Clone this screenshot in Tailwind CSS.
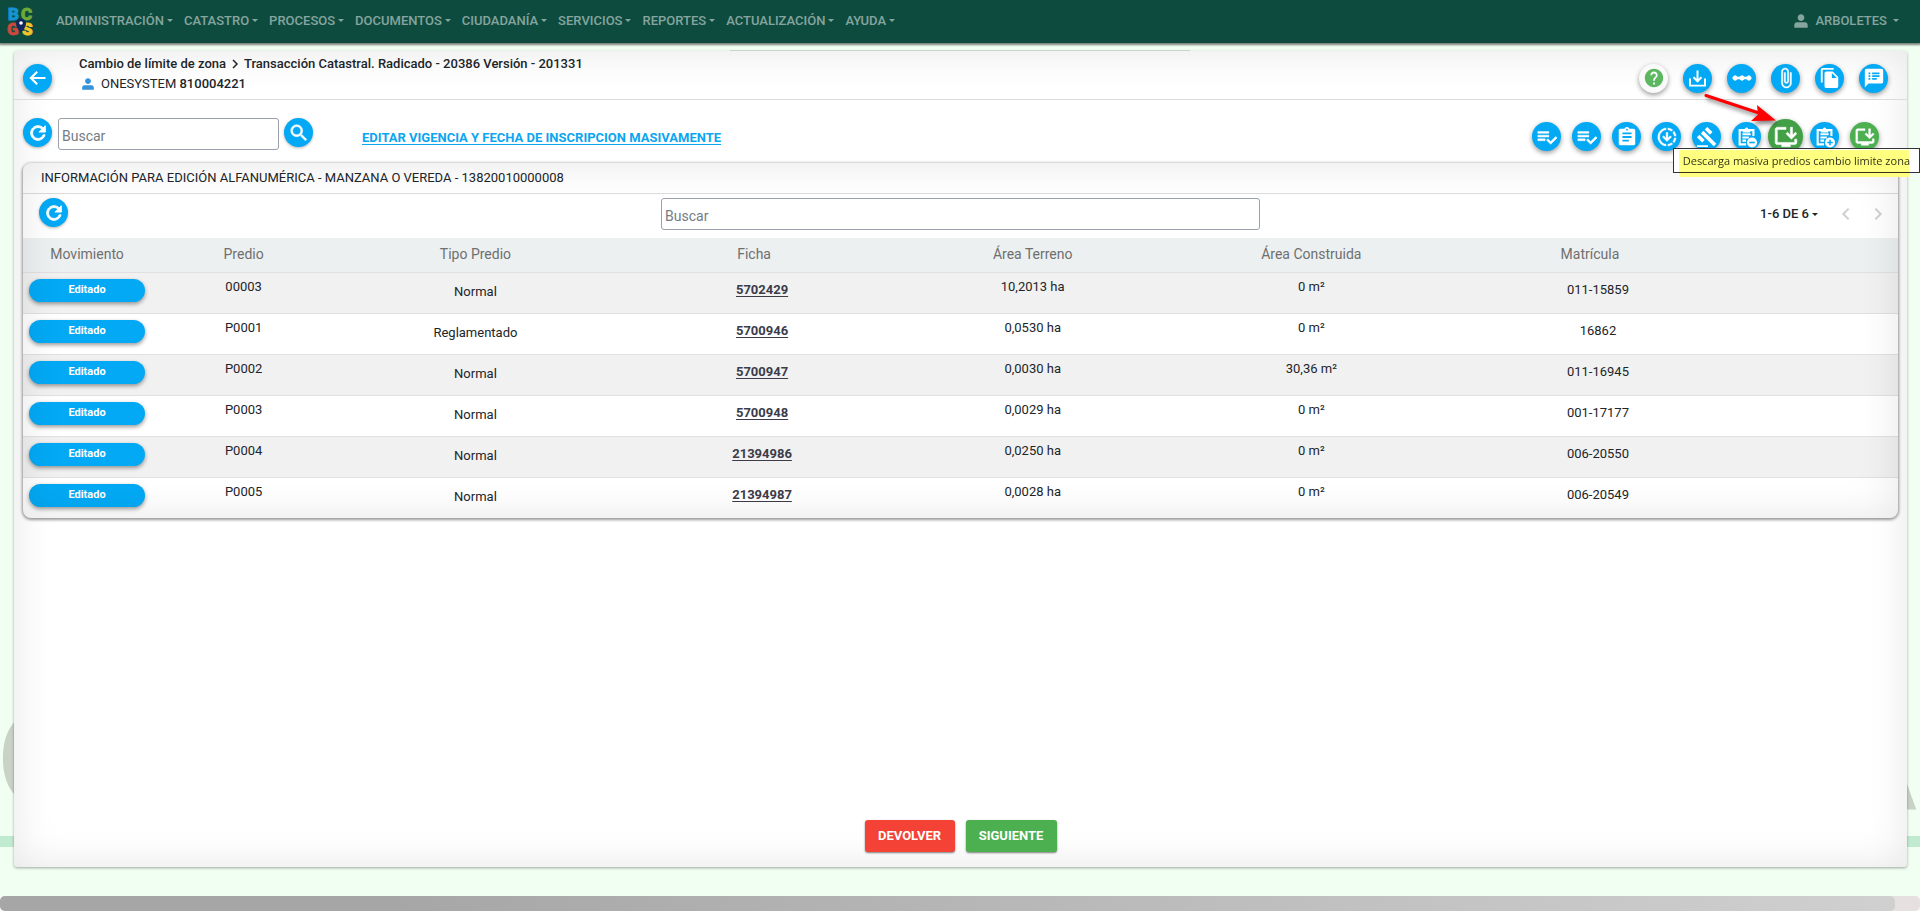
<!DOCTYPE html>
<html lang="es">
<head>
  <meta charset="UTF-8" />
  <meta name="viewport" content="width=device-width, initial-scale=1" />
  <title>Cambio de límite de zona</title>
  <script src="https://cdn.jsdelivr.net/npm/@tailwindcss/browser@4"></script>
</head>
<body class="relative flex h-screen flex-col overflow-hidden bg-[#f0fff2] font-[Roboto,sans-serif] text-[13px] leading-5 text-[#212529]">

  <!-- Icon sprite -->
  <svg class="hidden" aria-hidden="true">
    <symbol id="i-back" viewBox="0 0 24 24"><path d="M21 12H4M11 4.500l-7.500 7.500 7.500 7.500" fill="none" stroke="currentColor" stroke-width="2.600" /></symbol>
    <symbol id="i-user" viewBox="0 0 24 24"><path d="M12 12c2.760 0 5-2.240 5-5s-2.240-5-5-5-5 2.240-5 5 2.240 5 5 5zM6 14c-2.200 0-4 1.800-4 4v4h20v-4c0-2.200-1.800-4-4-4z" /></symbol>
    <symbol id="i-refresh" viewBox="0 0 24 24"><path stroke="currentColor" d="M17.650 6.350C16.200 4.900 14.210 4 12 4c-4.420 0-7.990 3.580-7.990 8s3.570 8 7.990 8c3.730 0 6.840-2.550 7.730-6h-2.080c-.82 2.330-3.040 4-5.650 4-3.310 0-6-2.690-6-6s2.690-6 6-6c1.660 0 3.140.69 4.220 1.780L13 11h7V4l-2.350 2.350z" /></symbol>
    <symbol id="i-search" viewBox="0 0 24 24"><path stroke="currentColor" stroke-width=".6" d="M15.500 14h-.79l-.28-.27A6.470 6.470 0 0 0 16 9.500 6.500 6.500 0 1 0 9.500 16c1.610 0 3.090-.59 4.230-1.570l.27.28v.79l5 4.990L20.490 19l-4.990-5zm-6 0C7.010 14 5 11.990 5 9.500S7.010 5 9.500 5 14 7.010 14 9.500 11.990 14 9.500 14z" /></symbol>
    <symbol id="i-help" viewBox="0 0 24 24"><path d="M12 2C6.480 2 2 6.480 2 12s4.480 10 10 10 10-4.480 10-10S17.520 2 12 2zm1 17h-2v-2h2v2zm2.070-7.750l-.9.920C13.450 12.900 13 13.500 13 15h-2v-.5c0-1.100.45-2.100 1.170-2.830l1.240-1.260c.37-.36.59-.86.59-1.410 0-1.100-.9-2-2-2s-2 .9-2 2H8c0-2.210 1.790-4 4-4s4 1.790 4 4c0 .88-.36 1.680-.93 2.250z" /></symbol>
    <symbol id="i-tray" viewBox="0 0 24 24"><path d="M2.500 12v9h19v-9M12 2v13M7 10.500l5 5 5-5" fill="none" stroke="currentColor" stroke-width="2.500" /></symbol>
    <symbol id="i-scale" viewBox="0 0 24 24"><path stroke="currentColor" stroke-width=".8" d="M19.500 9.500c-1.030 0-1.900.62-2.290 1.500h-2.920c-.39-.88-1.260-1.500-2.290-1.500s-1.900.62-2.290 1.500H6.790c-.39-.88-1.260-1.500-2.290-1.500C3.120 9.500 2 10.620 2 12s1.120 2.500 2.500 2.500c1.030 0 1.900-.62 2.290-1.500h2.920c.39.88 1.260 1.500 2.290 1.500s1.900-.62 2.290-1.500h2.920c.39.88 1.260 1.500 2.290 1.500 1.380 0 2.500-1.120 2.500-2.500s-1.120-2.500-2.500-2.500z" /></symbol>
    <symbol id="i-clip" viewBox="0 0 24 24"><path stroke="currentColor" stroke-width=".4" d="M16.500 6v11.500c0 2.210-1.790 4-4 4s-4-1.790-4-4V5c0-1.380 1.120-2.500 2.500-2.500s2.500 1.120 2.500 2.500v10.500c0 .55-.45 1-1 1s-1-.45-1-1V6H10v9.500c0 1.380 1.120 2.500 2.500 2.500s2.500-1.120 2.500-2.500V5c0-2.210-1.790-4-4-4S7 2.790 7 5v12.500c0 3.040 2.460 5.500 5.500 5.500s5.500-2.460 5.500-5.500V6h-1.500z" /></symbol>
    <symbol id="i-copy" viewBox="0 0 24 24"><path d="M16 1H4c-1.100 0-2 .9-2 2v14h2V3h12V1zm-1 4l6 6v10c0 1.100-.9 2-2 2H7.990C6.890 23 6 22.100 6 21l.01-14c0-1.100.89-2 1.990-2h7zm-1 7h5.500L14 6.500V12z" /></symbol>
    <symbol id="i-notes" viewBox="0 0 24 24"><path d="M20 2H4c-1.100 0-1.990.9-1.990 2L2 22l4-4h14c1.100 0 2-.9 2-2V4c0-1.100-.9-2-2-2zM8 14H6v-2h2v2zm0-3H6V9h2v2zm0-3H6V6h2v2zm7 6h-5v-2h5v2zm3-3h-8V9h8v2zm0-3h-8V6h8v2z" /></symbol>
    <symbol id="i-check" viewBox="0 0 24 24"><path stroke="currentColor" stroke-width=".5" d="M14 10H2v2h12v-2zm0-4H2v2h12V6zM2 16h8v-2H2v2zm19.500-4.500L23 13l-6.990 7-4.510-4.500L13 14l3.010 3 5.490-5.500z" /></symbol>
    <symbol id="i-task" viewBox="0 0 24 24"><path d="M19 3h-4.180C14.400 1.840 13.300 1 12 1c-1.300 0-2.400.84-2.820 2H5c-1.100 0-2 .9-2 2v14c0 1.100.9 2 2 2h14c1.100 0 2-.9 2-2V5c0-1.100-.9-2-2-2zm-7 0c.55 0 1 .45 1 1s-.45 1-1 1-1-.45-1-1 .45-1 1-1zm2 14H7v-2h7v2zm3-4H7v-2h10v2zm0-4H7V7h10v2z" /></symbol>
    <symbol id="i-downloading" viewBox="0 0 24 24"><path stroke="currentColor" stroke-width=".4" d="M18.320 4.260C16.840 3.050 15.010 2.250 13 2.050v2.020c1.460.18 2.790.76 3.900 1.620l1.420-1.430zM19.930 11h2.020c-.2-2.010-1-3.840-2.210-5.320L18.310 7.100c.86 1.110 1.440 2.440 1.620 3.900zM18.310 16.900l1.430 1.430c1.210-1.480 2.010-3.320 2.210-5.320h-2.020c-.18 1.450-.76 2.780-1.620 3.890zM13 19.930v2.020c2.010-.2 3.840-1 5.320-2.210l-1.430-1.430c-1.100.86-2.430 1.440-3.890 1.620zM15.590 10.590L13 13.170V7h-2v6.170l-2.590-2.590L7 12l5 5 5-5-1.410-1.410zM11 19.930v2.020c-5.050-.5-9-4.760-9-9.950s3.950-9.450 9-9.950v2.020C7.050 4.560 4 7.920 4 12s3.050 7.440 7 7.930z" /></symbol>
    <symbol id="i-gavel" viewBox="0 0 24 24"><path d="M1 21h12v2H1v-2zM5.240 8.070l2.830-2.830 14.140 14.140-2.830 2.830L5.240 8.070zM12.320 1l5.660 5.660-2.830 2.830-5.660-5.660L12.320 1zM3.830 9.480l5.660 5.660-2.830 2.830L1 12.310l2.830-2.830z" /></symbol>
    <symbol id="i-task-less" viewBox="0 0 24 24"><path d="M11 20H4V4.500h15V11M7 9h9M7 12.500h7M7 16h4" fill="none" stroke="currentColor" stroke-width="2.300" /><path d="M7.500 7V3.500h2a2 2 0 0 1 4 0h2V7z" /><circle cx="17.500" cy="18" r="5.500" /><path d="M14.500 18h6" stroke="#03a9f4" stroke-width="1.800" /></symbol>
    <symbol id="i-task-more" viewBox="0 0 24 24"><path d="M11 20H4V4.500h15V11M7 9h9M7 12.500h7M7 16h4" fill="none" stroke="currentColor" stroke-width="2.300" /><path d="M7.500 7V3.500h2a2 2 0 0 1 4 0h2V7z" /><circle cx="17.500" cy="18" r="5.500" /><path d="M14.500 18h6M17.500 15v6" stroke="#03a9f4" stroke-width="1.600" /></symbol>
    <symbol id="i-install" viewBox="0 0 24 24"><path stroke="currentColor" stroke-width=".5" d="M20 17H4V5h8V3H4c-1.100 0-2 .9-2 2v12c0 1.100.9 2 2 2h4v2h8v-2h4c1.100 0 2-.9 2-2v-3h-2v3zM17 14l5-5-1.410-1.410L18 10.170V3h-2v7.170l-2.590-2.580L12 9l5 5z" /></symbol>
    <symbol id="i-left" viewBox="0 0 24 24"><path d="M16 4l-8 8 8 8" fill="none" stroke="currentColor" stroke-width="3" /></symbol>
    <symbol id="i-right" viewBox="0 0 24 24"><path d="M8 4l8 8-8 8" fill="none" stroke="currentColor" stroke-width="3" /></symbol>
    <symbol id="i-caret" viewBox="0 0 6 3"><path d="M0 0h6L3 3z" /></symbol>
  </svg>

  <!-- Watermark behind the panel -->
  <div class="absolute inset-x-0 top-[690px] flex justify-between font-['Liberation_Sans',sans-serif] text-[144px] leading-[140px] font-bold text-[#c8d2c6]" aria-hidden="true">
    <span class="-ml-[3px]">C</span><span>A</span>
  </div>
  <div class="absolute inset-x-0 top-[836px] h-[11px] bg-[#c1ebd0]"></div>

  <nav class="relative z-10 flex h-[43px] shrink-0 items-center bg-[#0c4b3e] pr-[21px] pb-[2px] pl-[7px] font-medium text-white/50 shadow-[0_1px_2px_1px_rgba(0,0,0,0.5)]">
    <a href="#" class="mt-[2px] mr-[21px]" aria-label="Inicio">
      <svg class="h-[30px] w-[28px] overflow-visible" viewBox="0 0 28 30" font-family="Roboto" font-weight="900" font-size="17" stroke-width=".8">
        <text x="1" y="13" fill="#1593d2" stroke="#1593d2">B</text>
        <text x="14" y="13" fill="#6fa93b" stroke="#6fa93b">C</text>
        <text x="0" y="28" fill="#c8493d" stroke="#c8493d">G</text>
        <text x="15" y="28" fill="#f0c52b" stroke="#f0c52b">S</text>
        <path d="M14 26c-3-4-5-6-5-9.500a5 5 0 0 1 10 0C19 20 17 22 14 26z" fill="#12285c" />
        <circle cx="14" cy="16" r="1.800" fill="#fff" />
      </svg>
    </a>
    <ul id="menu" class="flex items-center gap-[11px]"></ul>
    <button type="button" class="ml-auto flex items-center">
      <svg class="mr-[6px] size-4 fill-current"><use href="#i-user" /></svg>ARBOLETES<svg class="ml-[6px] h-[3px] w-[6px] fill-current"><use href="#i-caret" /></svg>
    </button>
  </nav>

  <div class="absolute inset-x-[38%] top-[50px] h-px bg-[#d2dfd3]"></div>

  <main class="relative mt-[8px] mr-[13px] mb-[44px] ml-[14px] flex grow flex-col rounded-[3px] bg-white shadow-[inset_0_0_40px_rgba(0,0,0,0.1),0_1px_3px_rgba(0,0,0,0.35)]">
    <header class="flex h-[49px] shrink-0 items-center border-b border-[#dcdcdc] pr-[19px] pl-[9px]">
      <button type="button" class="mt-[6px] flex size-[29px] items-center justify-center rounded-full bg-[#03a9f4] text-white shadow-[0_2px_5px_rgba(0,0,0,0.4)]" aria-label="Volver"><svg class="size-5"><use href="#i-back" /></svg></button>
      <div class="mb-[2px] ml-[27px]">
        <h1 class="flex items-center font-medium">Cambio de límite de zona<svg class="mx-[3px] size-[12px]"><use href="#i-right" /></svg>Transacción Catastral. Radicado - 20386 Versión - 201331</h1>
        <p class="flex items-center"><svg class="mr-[6px] ml-[2px] size-[14px] fill-[#3493db]"><use href="#i-user" /></svg>ONESYSTEM&nbsp;<span class="font-medium">810004221</span></p>
      </div>
      <div id="header-actions" class="mt-[6px] ml-auto flex gap-[15px]"></div>
    </header>

    <section class="flex h-[63px] shrink-0 items-start pt-[18px] pl-[9px]">
      <button type="button" class="flex size-[29px] items-center justify-center rounded-full bg-[#03a9f4] text-white shadow-[0_1px_3px_rgba(0,0,0,0.3)]" aria-label="Recargar"><svg class="size-[22px] fill-current"><use href="#i-refresh" /></svg></button>
      <input type="text" placeholder="Buscar" aria-label="Buscar" class="ml-[6px] h-8 w-[221px] rounded-[3px] border border-[#9aa0ac] bg-white px-[3px] pt-[4px] text-[14px] placeholder-[#747c84]" />
      <button type="button" class="ml-[5px] flex size-[29px] items-center justify-center rounded-full bg-[#03a9f4] text-white shadow-[0_1px_3px_rgba(0,0,0,0.3)]" aria-label="Consultar"><svg class="size-[22px] fill-current"><use href="#i-search" /></svg></button>
      <a href="#" class="mt-[10px] ml-[49px] font-bold text-[#0ca5f0] underline underline-offset-2">EDITAR VIGENCIA Y FECHA DE INSCRIPCION MASIVAMENTE</a>
      <div id="tool-actions" class="mt-[1px] mr-[28px] ml-auto flex h-[35px] items-center gap-[11px]"></div>
    </section>

    <section class="relative mr-[9px] ml-[9px] overflow-hidden rounded-lg bg-white shadow-[0_1px_3px_1px_rgba(0,0,0,0.4)]">
      <h2 class="h-[31px] border-b border-[#dcdcdc] pt-[5px] pl-[18px]">INFORMACIÓN PARA EDICIÓN ALFANUMÉRICA - MANZANA O VEREDA - 13820010000008</h2>
      <div class="grid h-[44px] grid-cols-[1fr_32.5%_1fr] items-start px-4 pt-[4px]">
        <button type="button" class="flex size-[29px] items-center justify-center rounded-full bg-[#03a9f4] text-white shadow-[0_1px_3px_rgba(0,0,0,0.3)]" aria-label="Recargar predios"><svg class="size-[22px] fill-current"><use href="#i-refresh" /></svg></button>
        <input type="text" placeholder="Buscar" aria-label="Buscar predio" class="h-8 rounded-[3px] border border-[#9aa0ac] bg-white px-[3px] pt-[4px] text-[14px] placeholder-[#747c84]" />
        <div class="flex h-8 items-center justify-end">
          <button type="button" class="flex items-center font-medium">1-6 DE 6<svg class="ml-[3px] h-[3px] w-[6px] fill-current"><use href="#i-caret" /></svg></button>
          <button type="button" class="ml-[20px] text-[#cfcfcf]" aria-label="Anterior" disabled><svg class="size-4"><use href="#i-left" /></svg></button>
          <button type="button" class="-mr-1 ml-4 text-[#cfcfcf]" aria-label="Siguiente página" disabled><svg class="size-4"><use href="#i-right" /></svg></button>
        </div>
      </div>
      <table class="w-full table-fixed text-center">
        <thead class="bg-[#ecf0f1] text-[14px] text-[#6f6f6f]">
          <tr class="h-[34px] border-b border-[#e0e0e0]">
            <th class="w-[6.83%] pb-[2px] font-normal">Movimiento</th>
            <th class="w-[9.87%] pb-[2px] font-normal">Predio</th>
            <th class="w-[14.86%] pb-[2px] font-normal">Tipo Predio</th>
            <th class="w-[14.86%] pb-[2px] font-normal">Ficha</th>
            <th class="w-[14.86%] pb-[2px] font-normal">Área Terreno</th>
            <th class="w-[14.86%] pb-[2px] font-normal">Área Construida</th>
            <th class="w-[14.86%] pb-[2px] font-normal">Matrícula</th>
            <td></td>
          </tr>
        </thead>
        <tbody id="rows"></tbody>
      </table>
      <div class="pointer-events-none absolute inset-0 rounded-lg shadow-[inset_0_0_40px_rgba(0,0,0,0.1)]"></div>
    </section>

    <footer class="mt-auto mb-[15px] flex justify-center gap-[11px] font-bold text-white">
      <button type="button" class="h-8 w-[90px] rounded-[3px] bg-[#f44336] shadow-[0_1px_2px_rgba(0,0,0,0.5)]">DEVOLVER</button>
      <button type="button" class="h-8 w-[91px] rounded-[3px] bg-[#4caf50] shadow-[0_1px_2px_rgba(0,0,0,0.5)]">SIGUIENTE</button>
    </footer>
  </main>

  <!-- Tooltip with its highlight and pointer -->
  <div role="tooltip" class="absolute top-[148px] right-0 z-20 h-[25px] border border-[#333] bg-white px-[9px] font-['Open_Sans',sans-serif] text-[11px] leading-[23px] text-[#333]">
    Descarga masiva predios cambio limite zona
    <div class="absolute top-[1px] right-[10px] left-[5px] h-[27px] bg-[#ffff80] mix-blend-multiply"></div>
  </div>
  <svg class="absolute top-[85px] right-[135px] z-20 h-[45px] w-[85px] drop-shadow-[2px_3px_2px_rgba(0,0,0,0.5)]" viewBox="0 0 85 45" aria-hidden="true">
    <path d="M6 10.500L62 29" stroke="#f00" stroke-width="3" stroke-linecap="round" />
    <path d="M57 20L76 35.500L51 36L58 29.500z" fill="#f00" />
  </svg>

  <div class="absolute inset-x-0 bottom-0 h-[15px] rounded-[5px] bg-[#e6e0e0]">
    <div class="h-full w-[98.7%] rounded-[5px] bg-linear-to-r from-[#a6a6a6] from-20% to-[#d0d0d0]"></div>
  </div>

  <script>
    const menu = ['ADMINISTRACIÓN', 'CATASTRO', 'PROCESOS', 'DOCUMENTOS', 'CIUDADANÍA', 'SERVICIOS', 'REPORTES', 'ACTUALIZACIÓN', 'AYUDA'];

    const blue = 'size-[29px] bg-[#03a9f4] text-white';
    const headerActions = [
      { icon: 'help', label: 'Ayuda', cls: 'size-[29px] bg-[#fafafa] text-[#5cb860]', size: 'size-[22px]' },
      { icon: 'tray', label: 'Descargar', cls: blue, size: 'size-[19px]' },
      { icon: 'scale', label: 'Flujo', cls: blue, size: 'size-[22px]' },
      { icon: 'clip', label: 'Adjuntos', cls: blue, size: 'size-[22px]' },
      { icon: 'copy', label: 'Copiar', cls: blue, size: 'size-[22px]' },
      { icon: 'notes', label: 'Observaciones', cls: blue, size: 'size-[22px]' }
    ];
    const toolActions = [
      { icon: 'check', label: 'Validar predios', cls: blue, size: 'size-[22px]' },
      { icon: 'check', label: 'Validar trámite', cls: blue, size: 'size-[22px]' },
      { icon: 'task', label: 'Resumen', cls: blue, size: 'size-[22px]' },
      { icon: 'downloading', label: 'Descargas', cls: blue, size: 'size-[22px]' },
      { icon: 'gavel', label: 'Resolución', cls: blue, size: 'size-[22px]' },
      { icon: 'task-less', label: 'Quitar', cls: blue, size: 'size-[22px]' },
      { icon: 'install', label: 'Descarga masiva predios cambio limite zona', cls: 'size-[35px] -mx-[4px] bg-[#43a047] text-white', size: 'size-[26px]' },
      { icon: 'task-more', label: 'Agregar', cls: blue, size: 'size-[22px]' },
      { icon: 'install', label: 'Descarga', cls: 'size-[29px] bg-[#4caf50] text-white', size: 'size-[22px]' }
    ];

    const predios = [
      ['00003', 'Normal', '5702429', '10,2013 ha', '0 m²', '011-15859'],
      ['P0001', 'Reglamentado', '5700946', '0,0530 ha', '0 m²', '16862'],
      ['P0002', 'Normal', '5700947', '0,0030 ha', '30,36 m²', '011-16945'],
      ['P0003', 'Normal', '5700948', '0,0029 ha', '0 m²', '001-17177'],
      ['P0004', 'Normal', '21394986', '0,0250 ha', '0 m²', '006-20550'],
      ['P0005', 'Normal', '21394987', '0,0028 ha', '0 m²', '006-20549']
    ];

    document.getElementById('menu').innerHTML = menu.map(item => `
      <li><a href="#" class="flex items-center">${item}<svg class="ml-[3px] h-[3px] w-[6px] fill-current"><use href="#i-caret" /></svg></a></li>
    `).join('');

    function renderActions(id, actions) {
      document.getElementById(id).innerHTML = actions.map(a => `
        <button type="button" aria-label="${a.label}" class="flex items-center justify-center rounded-full shadow-[0_2px_5px_rgba(0,0,0,0.4)] ${a.cls}">
          <svg class="fill-current ${a.size}"><use href="#i-${a.icon}" /></svg>
        </button>
      `).join('');
    }
    renderActions('header-actions', headerActions);
    renderActions('tool-actions', toolActions);

    document.getElementById('rows').innerHTML = predios.map(p => `
      <tr class="h-[41px] border-b border-[#e0e0e0] align-top last:border-0 odd:bg-[#f1f1f1]">
        <td class="px-[6px] pt-[6px]"><button type="button" class="block h-[23px] w-full rounded-full bg-[#03a9f4] text-[11px] font-bold text-white shadow-[0_2px_4px_rgba(0,0,0,0.4)]">Editado</button></td>
        <td class="pt-[4px]">${p[0]}</td>
        <td class="pt-[9px]">${p[1]}</td>
        <td class="pt-[7px] pl-4"><a href="#" class="font-bold text-[#3c3c4a] underline underline-offset-2">${p[2]}</a></td>
        <td class="pt-[4px]">${p[3]}</td>
        <td class="pt-[4px]">${p[4]}</td>
        <td class="pt-[7px] pl-4">${p[5]}</td>
        <td></td>
      </tr>
    `).join('');
  </script>
</body>
</html>
